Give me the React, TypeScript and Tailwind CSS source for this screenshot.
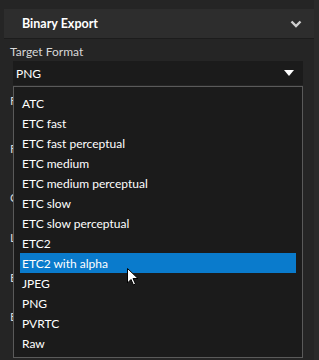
import React from "react";

const formats = [
  "ATC",
  "ETC fast",
  "ETC fast perceptual",
  "ETC medium",
  "ETC medium perceptual",
  "ETC slow",
  "ETC slow perceptual",
  "ETC2",
  "ETC2 with alpha",
  "JPEG",
  "PNG",
  "PVRTC",
  "Raw",
];

// labels of the property rows hidden behind the open list
const hiddenRows = [
  { label: "Format", gap: "mt-[6px]" },
  { label: "Flip", gap: "mt-[28px]" },
  { label: "Compression", gap: "mt-[29px]" },
  { label: "Level", gap: "mt-[20px]" },
  { label: "Encoding", gap: "mt-[20px]" },
  { label: "Extension", gap: "mt-[19px]" },
];

export default function App() {
  return (
    <div
      className="relative w-[319px] h-[360px] overflow-hidden bg-[#252525] flex text-[12px] text-[#e6e6e6]"
      style={{ fontFamily: 'Lato, "Noto Sans", sans-serif' }}
    >
      <div className="w-[314px] pt-[9px] pl-[4px]">
        <div className="h-[30px] bg-[#2d2d2d] border-b border-[#1c1c1c] flex items-center justify-between pl-[18px] pr-[12px]">
          <span className="font-bold text-white text-[12.5px] leading-[16px] pt-[1px]">Binary Export</span>
          <svg width="12" height="8" viewBox="0 0 12 8" className="text-[#cfcfcf]">
            <path d="M1.5 1.5 L6 6 L10.5 1.5" fill="none" stroke="currentColor" strokeWidth="2.4" />
          </svg>
        </div>

        <div className="pl-[6px] pt-[3px] h-[21px] leading-[20px] text-[#d8d8d8]">Target Format</div>

        <div className="ml-[9px] w-[290px] h-[24px] mt-[1px] bg-[#1b1b1b] flex items-center justify-between pl-[3px] pr-[9px]">
          <span className="text-white leading-[16px] pt-[1px]">PNG</span>
          <svg width="10" height="6" viewBox="0 0 10 6">
            <path d="M0 0 H10 L5 6 Z" fill="#ffffff" />
          </svg>
        </div>

        <div className="flex flex-col pl-[6px] text-[#d8d8d8]">
          {hiddenRows.map((r) => (
            <div key={r.label} className={"h-[20px] leading-[20px] " + r.gap}>
              {r.label}
            </div>
          ))}
        </div>
      </div>
      <div className="flex-1 bg-[#2a2a2a]" />

      <div className="absolute left-[13px] top-[86px] w-[290px] h-[272px] bg-[#1b1b1b] border border-[#5a5a5a] pt-[6px] px-[6px]">
        {formats.map((f) => (
          <div
            key={f}
            className={
              "h-[20px] leading-[22px] pl-[2px] text-white " +
              (f === "ETC2 with alpha" ? "bg-[#0a7bcc]" : "")
            }
          >
            {f}
          </div>
        ))}
      </div>

      <svg className="absolute left-[127px] top-[268px]" width="12" height="18" viewBox="0 0 12 18">
        <path
          d="M0.5 0.5 V15 L4 11.5 L6.5 17 L8.5 16 L6 10.5 H11 Z"
          fill="#ffffff"
          stroke="#000000"
          strokeWidth="1"
          strokeLinejoin="miter"
        />
      </svg>
    </div>
  );
}
